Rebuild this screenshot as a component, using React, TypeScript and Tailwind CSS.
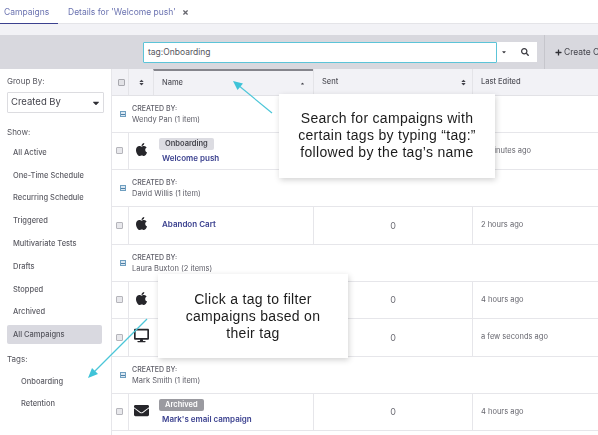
import { FaApple, FaDesktop, FaEnvelope, FaSearch, FaSort, FaPlus, FaTimes, FaCaretDown, FaCaretUp } from "react-icons/fa";

const UI = "font-['Inter',sans-serif]";

function Group({ name, h = "h-[37px]" }: { name: string; h?: string }) {
  return (
    <div className={`${h} flex items-center border-b border-[#e6e6ea] bg-white shrink-0`}>
      <div className="w-[17px] flex justify-end pr-[3px]">
        <div className="w-[6px] h-[6px] border border-[#6f9fc0] bg-[#dbe8f2] flex items-center justify-center">
          <div className="w-[4px] h-px bg-[#4f7fa6]" />
        </div>
      </div>
      <div className="ml-[3px] text-[7px] leading-[11px] text-[#5c5c66]">
        <div className="font-medium">CREATED BY:</div>
        <div className="text-[7.5px]">{name}</div>
      </div>
    </div>
  );
}

function Row({
  icon,
  tag,
  archived,
  title,
  time,
  sent,
  h = "h-[37px]",
}: {
  icon: React.ReactNode;
  tag?: string;
  archived?: boolean;
  title?: string;
  time: string;
  sent?: string;
  h?: string;
}) {
  return (
    <div className={`${h} flex border-b border-[#e6e6ea] bg-white shrink-0`}>
      <div className="w-[16px] flex items-center pl-[4px] pb-[1px]">
        <div className="w-[7px] h-[7px] rounded-[1px] border border-[#b5b5bb] bg-[#e8e8ec]" />
      </div>
      <div className="w-[25px] border-l border-[#e6e6ea] flex items-center justify-center pb-[4px] text-[#26262b] text-[15px]">
        {icon}
      </div>
      <div className="w-[160px] border-l border-transparent pl-[8px] flex flex-col justify-center">
        {tag && (
          <div
            className={`self-start ml-[-3px] h-[12px] px-[6px] rounded-[2px] text-[7.5px] leading-[12px] font-semibold mb-[3px] ${
              archived ? "bg-[#9a9aa0] text-white" : "bg-[#dcdce2] text-[#44444c]"
            }`}
          >
            {tag}
          </div>
        )}
        {title && (
          <div className={`text-[8px] leading-[11px] font-semibold text-[#3b418f] ${tag ? "" : "pb-[3px]"}`}>{title}</div>
        )}
      </div>
      <div className="w-[159px] border-l border-[#e6e6ea] flex items-center justify-center text-[9px] text-[#6c6c74]">
        {sent ?? ""}
      </div>
      <div className="flex-1 border-l border-[#e6e6ea] pl-[8px] flex items-center text-[7.5px] text-[#66666e] pb-[1px]">{time}</div>
    </div>
  );
}

const items = [
  "All Active",
  "One-Time Schedule",
  "Recurring Schedule",
  "Triggered",
  "Multivariate Tests",
  "Drafts",
  "Stopped",
  "Archived",
];

export default function App() {
  return (
    <div className={`relative w-[598px] h-[435px] overflow-hidden bg-white ${UI}`}>
      <div className="blur-[0.35px]">
        {/* tabs */}
        <div className="h-[24px] flex items-stretch border-b border-[#e4e4e8] text-[8.5px] pt-[1px]">
          <div className="w-[58px] pl-[4px] flex items-center text-[#6a72b0] border-b border-[#3b418f] h-[23px]">Campaigns</div>
          <div className="ml-[10px] flex items-center text-[#6a72b0] h-[23px]">
            Details for 'Welcome push'
            <FaTimes className="ml-[6px] text-[#66666e] text-[7px]" />
          </div>
        </div>
        <div className="h-[11px] bg-[#f2f2f6]" />
        {/* toolbar */}
        <div className="h-[34px] bg-[#d8d8de] flex items-center pl-[143px]">
          <div className="w-[354px] shrink-0 h-[21px] bg-white border border-[#5cc4d8] rounded-[1px] pl-[4px] flex items-center text-[8.5px] text-[#55555d]">
            tag:Onboarding
          </div>
          <div className="w-[40px] shrink-0 h-[20px] bg-white flex items-center text-[#3a3a40]">
            <FaCaretDown className="ml-[4px] text-[6px]" />
            <FaSearch className="ml-[14px] text-[8px]" />
          </div>
          <div className="ml-[7px] w-px h-[34px] bg-[#c6c6cc] shrink-0" />
          <div className="ml-[10px] flex items-center text-[8.5px] whitespace-nowrap text-[#44444c]">
            <FaPlus className="mr-[2px] text-[7px] text-[#2e2e34]" />
            Create Campaign
          </div>
        </div>
        {/* body */}
        <div className="flex h-[366px]">
          <aside className="w-[112px] shrink-0 border-r border-[#e6e6ea] pl-[7px] text-[8px] text-[#55555d]">
            <div className="mt-[7px] text-[8px] leading-[11px]">Group By:</div>
            <div className="mt-[5px] w-[97px] h-[21px] border border-[#dcdce0] rounded-[1px] flex items-center justify-between pl-[3px] pr-[2px] text-[9.5px] text-[#44444c]">
              Created By
              <FaCaretDown className="text-[10px] text-[#2e2e34]" />
            </div>
            <div className="mt-[14px] leading-[11px]">Show:</div>
            <div className="mt-[3px] flex flex-col">
              {items.map((t) => (
                <div key={t} className="h-[22.8px] pl-[6px] flex items-center font-medium text-[#5c5c64] text-[7.5px]">
                  {t}
                </div>
              ))}
            </div>
            <div className="mt-[2px] w-[95px] h-[19px] bg-[#d9d9e0] rounded-[2px] pl-[6px] flex items-center font-medium text-[7.5px] text-[#55555d]">
              All Campaigns
            </div>
            <div className="mt-[10px] leading-[11px]">Tags:</div>
            <div className="mt-[5px] flex flex-col font-medium text-[7.5px] text-[#5c5c64]">
              <div className="h-[22px] pl-[14px] flex items-center">Onboarding</div>
              <div className="h-[22px] pl-[14px] flex items-center">Retention</div>
            </div>
          </aside>
          <main className="flex-1 flex flex-col min-w-0">
            <div className="h-[27px] bg-[#f2f2f6] border-b border-[#e2e2e6] flex shrink-0 text-[7.5px] font-medium text-[#55555d]">
              <div className="w-[16px] flex items-center pl-[6px]">
                <div className="w-[7px] h-[7px] rounded-[1px] border border-[#a8a8ae] bg-[#e2e2e6]" />
              </div>
              <div className="w-[25px] border-l border-[#e4e4e8] flex items-center justify-center text-[#44444c]">
                <FaSort className="text-[7px]" />
              </div>
              <div className="w-[160px] border-l border-[#e4e4e8] border-t-2 border-t-[#85858c] pl-[8px] pr-[8px] flex items-center justify-between">
                Name
                <FaCaretUp className="text-[5px] text-[#44444c]" />
              </div>
              <div className="w-[159px] border-l border-[#e4e4e8] pl-[8px] pr-[5px] flex items-center justify-between">
                Sent
                <FaSort className="text-[7px] text-[#44444c]" />
              </div>
              <div className="flex-1 border-l border-[#e4e4e8] pl-[8px] flex items-center">Last Edited</div>
            </div>
            <Group name="Wendy Pan (1 item)" />
            <Row icon={<FaApple />} tag="Onboarding" title="Welcome push" time="5 minutes ago" />
            <Group name="David Willis (1 item)" />
            <Row icon={<FaApple />} title="Abandon Cart" sent="0" time="2 hours ago" h="h-[38px]" />
            <Group name="Laura Buxton (2 items)" />
            <Row icon={<FaApple />} sent="0" time="4 hours ago" />
            <Row icon={<FaDesktop className="text-[15px]" />} sent="0" time="a few seconds ago" h="h-[38px]" />
            <Group name="Mark Smith (1 item)" />
            <Row icon={<FaEnvelope />} tag="Archived" archived title="Mark's email campaign" sent="0" time="4 hours ago" />
          </main>
        </div>
      </div>

      {/* callouts */}
      <div className="absolute left-[279px] top-[94px] w-[216px] h-[84px] pb-[2px] bg-white shadow-[1px_2px_6px_rgba(0,0,0,0.18)] flex items-center justify-center text-center font-['Liberation_Sans',sans-serif] text-[14px] leading-[17px] tracking-[0.3px] text-[#1c1c1c]">
        <div>
          Search for campaigns with
          <br />
          certain tags by typing “tag:”
          <br />
          followed by the tag’s name
        </div>
      </div>
      <div className="absolute left-[158px] top-[274px] w-[190px] h-[84px] bg-white shadow-[1px_2px_6px_rgba(0,0,0,0.18)] flex items-center justify-center text-center font-['Liberation_Sans',sans-serif] text-[14px] leading-[17px] tracking-[0.3px] text-[#1c1c1c]">
        <div>
          Click a tag to filter
          <br />
          campaigns based on
          <br />
          their tag
        </div>
      </div>
      <svg className="absolute left-0 top-0 pointer-events-none" width="598" height="435">
        <line x1="272" y1="113" x2="238" y2="85" stroke="#4cc6d8" strokeWidth="1.2" />
        <polygon points="233,81 243,83.5 237.5,90" fill="#3fc3d8" />
        <line x1="147" y1="319" x2="93" y2="373" stroke="#4cc6d8" strokeWidth="1.2" />
        <polygon points="88,378 92,368 98,374" fill="#3fc3d8" />
      </svg>
    </div>
  );
}
